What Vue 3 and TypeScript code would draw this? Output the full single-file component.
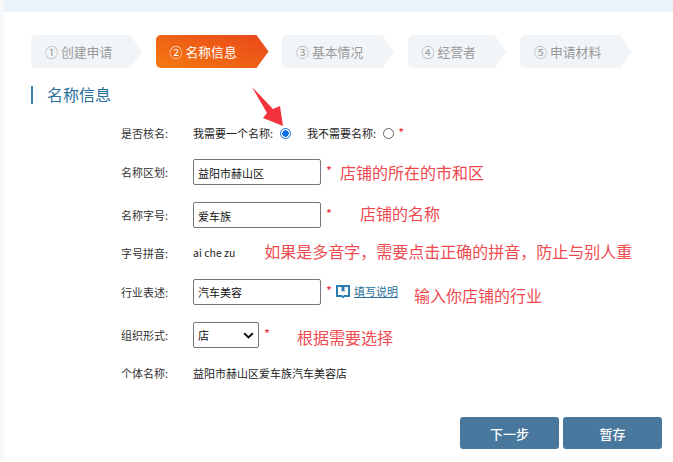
<script setup lang="ts">
const steps = [
  { mark: '①', text: '创建申请', w: 111, active: false },
  { mark: '②', text: '名称信息', w: 113, active: true },
  { mark: '③', text: '基本情况', w: 112, active: false },
  { mark: '④', text: '经营者', w: 99, active: false },
  { mark: '⑤', text: '申请材料', w: 112, active: false },
]
</script>

<template>
  <div class="page">
    <div class="topbar"></div>
    <div class="sheet">
      <div class="steps">
        <div
          v-for="s in steps"
          :key="s.mark"
          class="step"
          :class="{ active: s.active }"
          :style="{ width: s.w + 'px' }"
        >
          <span class="mark">{{ s.mark }}</span><span>{{ s.text }}</span>
        </div>
      </div>

      <h2 class="title">名称信息</h2>

      <svg class="arrow" width="44" height="56" viewBox="0 0 44 56">
        <path d="M1 0 L22 22 L29 19 L32 39 L12 31 L16 26 Z" fill="#f2333d" />
      </svg>

      <div class="form">
        <div class="row">
          <span class="label">是否核名:</span>
          <span class="text">我需要一个名称:</span>
          <span class="radio on"></span>
          <span class="text second">我不需要名称:</span>
          <span class="radio"></span>
          <span class="star s1">*</span>
        </div>
        <div class="row">
          <span class="label">名称区划:</span>
          <span class="field">益阳市赫山区</span>
          <span class="star">*</span>
          <span class="note n1">店铺的所在的市和区</span>
        </div>
        <div class="row">
          <span class="label">名称字号:</span>
          <span class="field">爱车族</span>
          <span class="star">*</span>
          <span class="note n2">店铺的名称</span>
        </div>
        <div class="row">
          <span class="label">字号拼音:</span>
          <span class="text pinyin">ai che zu</span>
          <span class="note n3">如果是多音字，需要点击正确的拼音，防止与别人重</span>
        </div>
        <div class="row">
          <span class="label">行业表述:</span>
          <span class="field">汽车美容</span>
          <span class="star">*</span>
          <svg class="book" width="14" height="14" viewBox="0 0 14 14">
            <path d="M1 2 H13 V12 H8.5 L7 13 L5.5 12 H1 Z" fill="none" stroke="#2a7db0" stroke-width="2" />
            <path d="M5.5 2 H8.5 V8 L7 6.8 L5.5 8 Z" fill="#2a7db0" />
          </svg>
          <a class="help">填写说明</a>
          <span class="note n4">输入你店铺的行业</span>
        </div>
        <div class="row">
          <span class="label">组织形式:</span>
          <span class="select">店
            <svg width="11" height="7" viewBox="0 0 11 7">
              <path d="M1.2 1.2 L5.5 5.4 L9.8 1.2" fill="none" stroke="#111" stroke-width="2" />
            </svg>
          </span>
          <span class="star">*</span>
          <span class="note n5">根据需要选择</span>
        </div>
        <div class="row">
          <span class="label">个体名称:</span>
          <span class="text">益阳市赫山区爱车族汽车美容店</span>
        </div>
      </div>

      <div class="actions">
        <button class="btn" type="button">下一步</button>
        <button class="btn" type="button">暂存</button>
      </div>
    </div>
  </div>
</template>

<style>
html, body { margin: 0; background: #fff; overflow: hidden; }
</style>

<style scoped>
.page {
  width: 673px;
  height: 462px;
  overflow: hidden;
  background: #f8f8f8;
  font-family: "Noto Sans CJK SC", "Liberation Sans", sans-serif;
}
.topbar { height: 12px; margin-left: 4px; background: #eaf2fa; }
.sheet {
  position: relative;
  height: 450px;
  margin-left: 4px;
  padding: 23px 0 0 27px;
  background: #fff;
  box-sizing: border-box;
}
.steps { display: flex; gap: 13.5px; }
.step {
  height: 33px;
  padding-left: 14px;
  box-sizing: border-box;
  display: flex;
  align-items: center;
  gap: 3px;
  font-size: 12.8px;
  color: #9a9a9a;
  background: #f2f5f8;
  border-radius: 5px 0 0 5px;
  clip-path: polygon(0 0, calc(100% - 12px) 0, 100% 50%, calc(100% - 12px) 100%, 0 100%);
}
.step.active {
  color: #fff;
  background: linear-gradient(20deg, #f4790f, #e9471b);
}
.mark { font-size: 13px; }
.title {
  margin: 18px 0 0;
  height: 18px;
  border-left: 2px solid #3f7da8;
  padding-left: 14px;
  font-size: 16px;
  line-height: 16px;
  font-weight: 400;
  color: #2a6f9b;
}
.arrow { position: absolute; left: 247px; top: 75px; }
.form {
  display: grid;
  grid-template-rows: 39.5px 38.5px 47.5px 28px 50px 36px 40px;
  margin: 9.25px 0 0 90px;
}
.row { display: flex; align-items: center; font-size: 11px; color: #222; }
.label { width: 72px; flex: none; color: #333; }
.text { white-space: nowrap; }
.pinyin { font-size: 10.5px; }
.second { margin-left: 16px; }
.radio {
  width: 11px;
  height: 11px;
  margin: 1px 0 0 7px;
  box-sizing: border-box;
  border: 1px solid #666;
  border-radius: 50%;
  background: #fff;
}
.radio.on {
  border: 1.5px solid #0b6fe8;
  background: radial-gradient(circle, #0b6fe8 0 3px, #fff 3.4px);
}
.field, .select {
  box-sizing: border-box;
  height: 26px;
  width: 128px;
  border: 1px solid #767676;
  border-radius: 2px;
  padding: 1px 0 0 4px;
  display: flex;
  align-items: center;
  font-size: 11px;
  background: #fff;
  color: #111;
}
.select {
  width: 66px;
  padding-left: 4px;
  justify-content: space-between;
  padding-right: 4px;
}
.star { color: #e8323c; font-size: 13px; margin-left: 5px; margin-top: -3px; }
.s1 { margin-left: 4px; margin-top: -1px; }
.note { color: #ee4a4f; font-size: 16px; white-space: nowrap; }
.n1 { margin-left: 8px; margin-top: -1px; }
.n2 { margin-left: 28px; margin-top: -5px; }
.n3 { margin-left: 29px; margin-top: -3px; }
.n4 { margin-left: 16px; margin-top: 7px; }
.n5 { margin-left: 27px; margin-top: 5px; }
.book { margin-left: 4px; margin-top: -2px; }
.help {
  margin-left: 4px;
  margin-top: -2px;
  color: #2a6f9b;
  text-decoration: underline;
  font-size: 11px;
}
.actions {
  position: absolute;
  left: 456px;
  top: 405px;
  display: flex;
  gap: 4px;
}
.btn {
  width: 99px;
  height: 32px;
  border: 0;
  border-radius: 3px;
  background: #49789f;
  color: #fff;
  font: 500 13px "Noto Sans CJK SC", sans-serif;
}
</style>
